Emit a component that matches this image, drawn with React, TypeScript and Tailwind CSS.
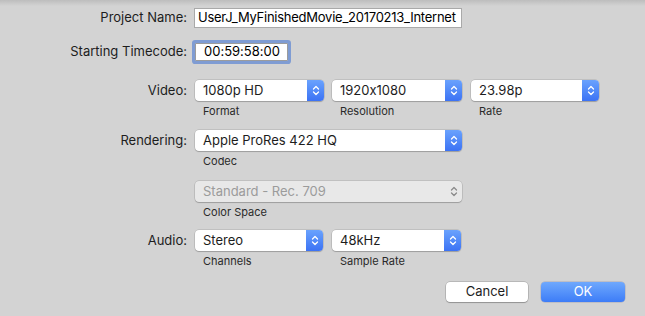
import React from "react";

const Chevrons = ({ disabled }: { disabled?: boolean }) => (
  <svg width="8" height="11" viewBox="0 0 8 11" fill="none">
    <path
      d="M1.5 4 L4 1.5 L6.5 4 M1.5 7 L4 9.5 L6.5 7"
      stroke={disabled ? "#8a8a8a" : "#ffffff"}
      strokeWidth="1.3"
      strokeLinecap="round"
      strokeLinejoin="round"
    />
  </svg>
);

const Popup = ({
  value,
  width,
  disabled,
}: {
  value: string;
  width: string;
  disabled?: boolean;
}) => (
  <div
    className={`${width} h-[21px] flex items-stretch rounded-[4px] shadow-[0_0_0_0.5px_rgba(0,0,0,0.18),0_1px_1px_rgba(0,0,0,0.18)] ${
      disabled ? "bg-[#e8e8e8]" : "bg-white"
    }`}
  >
    <div
      className={`flex-1 pl-[8px] flex items-center text-[13px] ${
        disabled ? "text-[#9b9b9b]" : "text-[#1d1d1d]"
      }`}
    >
      {value}
    </div>
    <div
      className={`w-[17px] flex items-center justify-center rounded-r-[4px] ${
        disabled ? "" : "bg-gradient-to-b from-[#6aa2fd] to-[#3c72f4]"
      }`}
    >
      <Chevrons disabled={disabled} />
    </div>
  </div>
);

const Caption = ({ children }: { children: React.ReactNode }) => (
  <div className="text-[11px] leading-[14px] text-[#2a2a2a] mt-[3px] pl-[8px]">{children}</div>
);

const Label = ({ children }: { children: React.ReactNode }) => (
  <div className="w-[187px] shrink-0 text-right text-[13px] text-[#1d1d1d] h-[21px] flex items-center justify-end">
    {children}
  </div>
);

export default function App() {
  return (
    <div
      className="relative w-[645px] h-[316px] bg-[#d3d3d3] overflow-hidden [font-feature-settings:'calt'_0]"
      style={{ fontFamily: "Inter, 'Liberation Sans', sans-serif" }}
    >
      <div className="absolute top-0 left-0 right-0 h-[6px] bg-gradient-to-b from-[#bdbdbd] to-[#d3d3d3]" />

      <div className="relative flex flex-col pt-[8px]">
        {/* Project name */}
        <div className="flex items-center gap-[7px] h-[20px]">
          <div className="w-[187px] text-right text-[13px] text-[#1d1d1d]">Project Name:</div>
          <div className="w-[268px] h-[20px] bg-white border border-[#a9a9a9] flex items-center pl-[3px] text-[13px] tracking-[-0.25px] text-black whitespace-nowrap overflow-hidden">
            UserJ_MyFinishedMovie_20170213_Internet
          </div>
        </div>

        {/* Timecode */}
        <div className="flex items-center gap-[8px] mt-[15px] h-[18px]">
          <div className="w-[187px] text-right text-[13px] text-[#1d1d1d]">Starting Timecode:</div>
          <div className="w-[93px] h-[18px] bg-white border border-[#9c9c9c] flex items-center pl-[8px] text-[13px] text-black ring-[3px] ring-[#7f9cd3] rounded-[1px]">
            00:59:58:00
          </div>
        </div>

        {/* Video */}
        <div className="flex gap-[8px] mt-[19px]">
          <Label>Video:</Label>
          <div className="flex gap-[8px]">
            <div>
              <Popup value="1080p HD" width="w-[129px]" />
              <Caption>Format</Caption>
            </div>
            <div>
              <Popup value="1920x1080" width="w-[130px]" />
              <Caption>Resolution</Caption>
            </div>
            <div className="ml-[1px]">
              <Popup value="23.98p" width="w-[128px]" />
              <Caption>Rate</Caption>
            </div>
          </div>
        </div>

        {/* Rendering */}
        <div className="flex gap-[8px] mt-[12px]">
          <Label>Rendering:</Label>
          <div>
            <Popup value="Apple ProRes 422 HQ" width="w-[267px]" />
            <Caption>Codec</Caption>
          </div>
        </div>

        {/* Color space */}
        <div className="flex gap-[8px] mt-[13px]">
          <div className="w-[187px] shrink-0" />
          <div>
            <Popup value="Standard - Rec. 709" width="w-[267px]" disabled />
            <Caption>Color Space</Caption>
          </div>
        </div>

        {/* Audio */}
        <div className="flex gap-[8px] mt-[11px]">
          <Label>Audio:</Label>
          <div className="flex gap-[9px]">
            <div>
              <Popup value="Stereo" width="w-[128px]" />
              <Caption>Channels</Caption>
            </div>
            <div>
              <Popup value="48kHz" width="w-[129px]" />
              <Caption>Sample Rate</Caption>
            </div>
          </div>
        </div>

        {/* Buttons */}
        <div className="flex justify-end gap-[13px] mt-[14px] pr-[20px]">
          <button className="w-[82px] h-[20px] bg-white rounded-[4px] text-[13px] text-[#1d1d1d] shadow-[0_0_0_0.5px_rgba(0,0,0,0.25),0_1px_1px_rgba(0,0,0,0.2)]">
            Cancel
          </button>
          <button className="w-[84px] h-[20px] rounded-[4px] text-[13px] text-white bg-gradient-to-b from-[#6fa8fd] to-[#3d7cf7] shadow-[0_0_0_0.5px_rgba(0,0,80,0.2)]">
            OK
          </button>
        </div>
      </div>
    </div>
  );
}
